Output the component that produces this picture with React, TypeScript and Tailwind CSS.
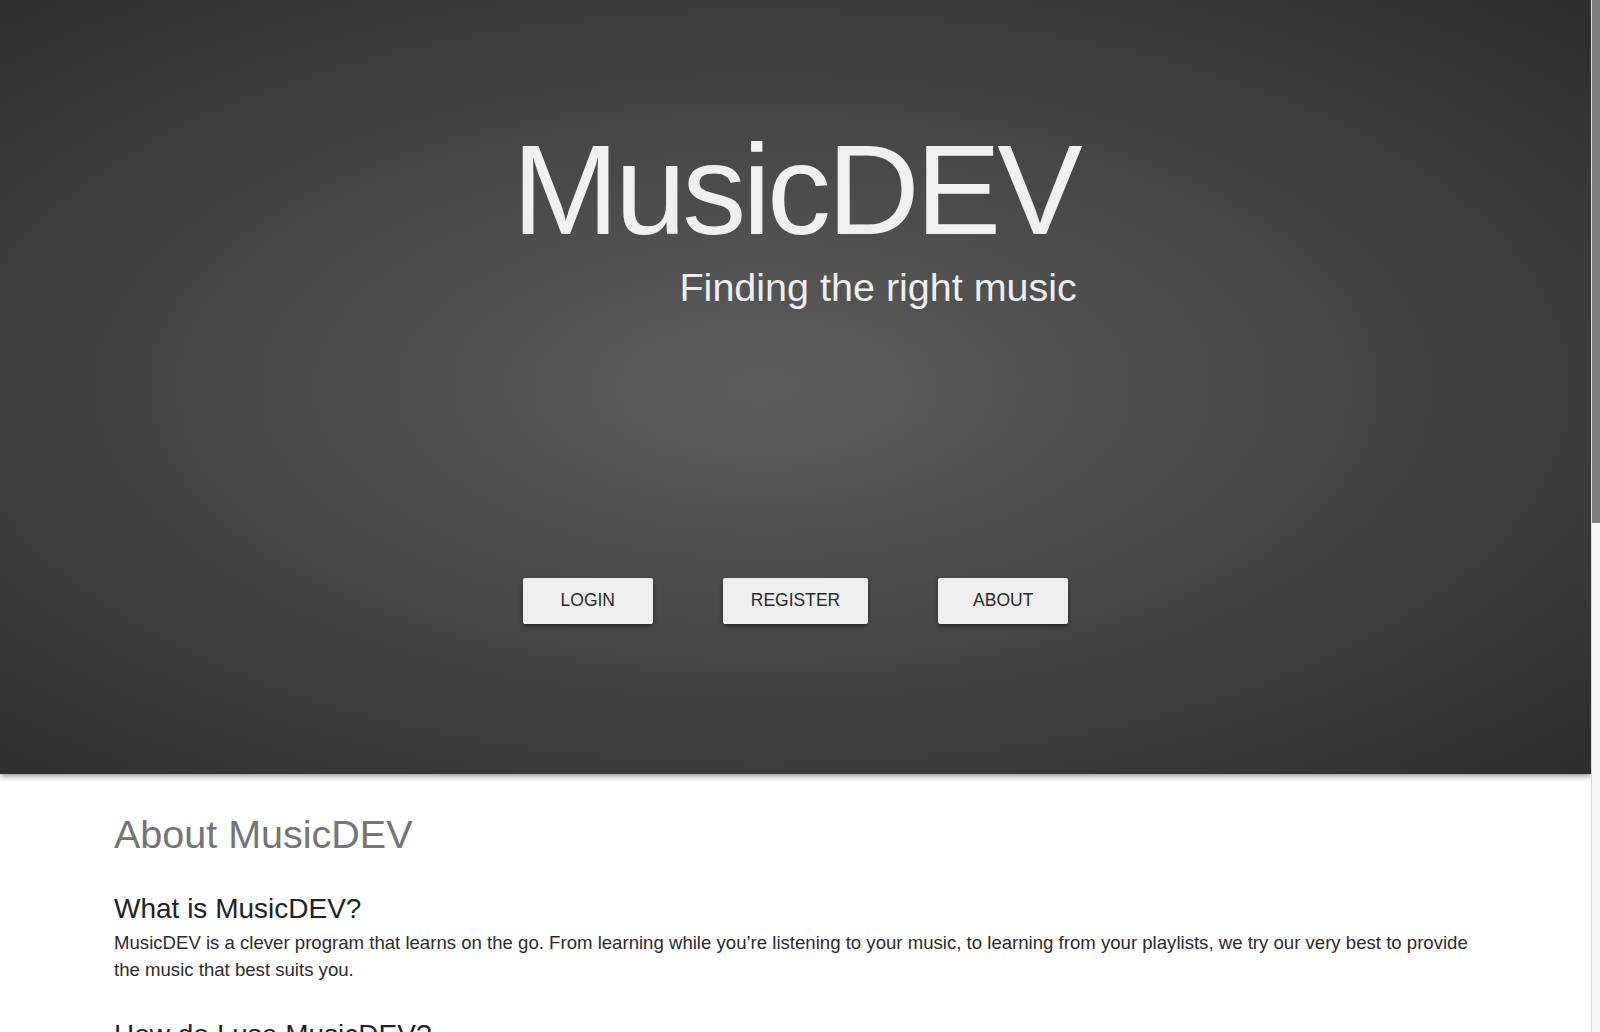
import { FC } from "react";

const buttons = ["LOGIN", "REGISTER", "ABOUT"];

const Hero: FC = () => {
  return (
    <div className="relative z-10 h-[774px] shrink-0 flex flex-col items-center bg-[radial-gradient(ellipse_at_48%_50%,#5d5d5d_0%,#2d2d2d_100%)] shadow-[0_2px_6px_rgba(0,0,0,0.45)]">
      <div className="pt-[126px] flex flex-col items-end">
        <h1 className="text-[128px] leading-none tracking-[-0.03em] text-[#f0f0f0]">
          MusicDEV
        </h1>
        <h2 className="mt-[14px] pr-[2px] text-[39.5px] leading-none text-[#eeeeee]">
          Finding the right music
        </h2>
      </div>
      <div className="mt-[270px] flex gap-[70px]">
        {buttons.map((b) => (
          <button
            key={b}
            className="h-[46px] min-w-[130px] px-[28px] rounded-[2px] bg-[#eeeeee] text-[17.5px] text-[#2a2a2a] shadow-[0_2px_4px_rgba(0,0,0,0.45)]"
          >
            {b}
          </button>
        ))}
      </div>
    </div>
  );
};

const About: FC = () => {
  return (
    <div className="px-[114px] pt-[37px] bg-white">
      <h2 className="text-[39.5px] leading-[1.2] text-[#757575]">
        About MusicDEV
      </h2>
      <h3 className="mt-[34px] text-[28px] leading-[1.2] text-[#222222]">
        What is MusicDEV?
      </h3>
      <p className="mt-[3px] text-[18.6px] leading-[27px] text-[#2b2b2b]">
        MusicDEV is a clever program that learns on the go. From learning while
        you’re listening to your music, to learning from your playlists, we try
        our very best to provide the music that best suits you.
      </p>
      <h3 className="mt-[35px] text-[28px] leading-[1.2] text-[#222222]">
        How do I use MusicDEV?
      </h3>
      <p className="text-[18.6px] leading-[27px] text-[#2b2b2b]">
        Simply create an account, connect your playlists and start listening.
        MusicDEV will do the rest.
      </p>
    </div>
  );
};

export default function App() {
  return (
    <div className="h-screen w-full flex overflow-hidden bg-white font-['Liberation_Sans',Arial,sans-serif]">
      <main className="flex-1 flex flex-col overflow-hidden">
        <Hero />
        <About />
      </main>
      <div className="w-[9px] shrink-0 flex flex-col bg-[#f7f7f7] border-l border-[#d9d9d9]">
        <div className="h-[523px] bg-[#7e7e7e]" />
      </div>
    </div>
  );
}
